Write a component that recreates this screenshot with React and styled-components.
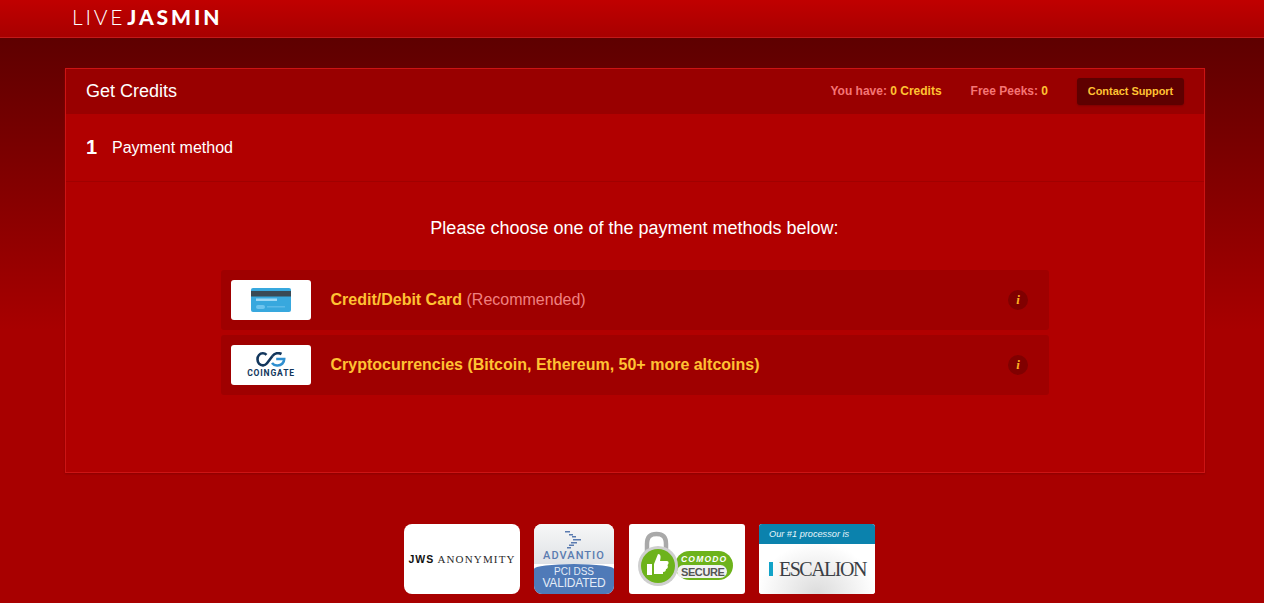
import React from 'react';
import styled, { createGlobalStyle } from 'styled-components';

const Global = createGlobalStyle`
  html, body { margin: 0; padding: 0; height: 603px; overflow: hidden; }
  body { font-family: "Liberation Sans", Arial, sans-serif; background: linear-gradient(to bottom, #5e0000 38px, #a80000 330px); color: #fff; }
`;
const Page = styled.div`height: 603px; overflow: hidden;`;
const TopBar = styled.header`
  height: 37px; padding-left: 72px; display: flex; align-items: flex-start;
  background: linear-gradient(to bottom, #c00000, #a80000); border-bottom: 1px solid #c21a1a;
`;
const Logo = styled.div`
  display: flex; margin-top: 7px; font-family: Lato, sans-serif; font-size: 21px; line-height: 20px; color: #fff;
`;
const LogoThin = styled.span`font-weight: 300; letter-spacing: 2.800px; margin-right: 2px;`;
const LogoBold = styled.span`font-weight: 900; letter-spacing: 2.900px;`;
const Main = styled.div`padding: 30px 59px 0 65px;`;
const Panel = styled.section`
  height: 405px; box-sizing: border-box; border: 1px solid #cc1414; background: #b10000;
  display: flex; flex-direction: column; box-shadow: 0 1px 2px #8a0000;
`;
const PanelHead = styled.div`
  height: 45px; flex: none; background: #990000; display: flex; align-items: center; justify-content: space-between;
  padding: 0 20px;
`;
const PanelTitle = styled.h1`margin: 0; font-size: 18px; font-weight: 400; color: #fff;`;
const Stats = styled.div`display: flex; align-items: center;`;
const Stat = styled.span`font-size: 12px; font-weight: 700; color: #f57575; margin-right: 29px; position: relative; top: -1px; b { color: #ffc233; }`;
const SupportBtn = styled.button`
  width: 107px; height: 27px; padding: 0 0 2px; border: 0; border-radius: 3px; background: #5e0000;
  box-shadow: 0 1px 2px #7d0000;
  font: 700 11px "Liberation Sans", Arial, sans-serif; letter-spacing: -.05px; color: #ffc233;
`;
const StepRow = styled.div`
  height: 68px; flex: none; box-sizing: border-box; border-bottom: 1px solid #a00000;
  display: flex; align-items: center; padding: 0 20px;
`;
const StepNum = styled.span`width: 26px; font-size: 20px; font-weight: 700; color: #fff;`;
const StepLabel = styled.span`font-size: 16px; line-height: 20px; color: #fff;`;
const Heading = styled.h2`
  margin: 36px 0 31px; padding-right: 1px; text-align: center; font-size: 18px; line-height: 21px; font-weight: 400; color: #fff;
`;
const Methods = styled.div`display: flex; flex-direction: column; gap: 5px; margin: 0 155px;`;
const Method = styled.div`
  height: 60px; box-sizing: border-box; background: #9f0000; border-radius: 3px; display: flex; align-items: center;
  padding: 0 21px 0 10px;
`;
const Thumb = styled.div`
  width: 80px; height: 40px; background: #fff; border-radius: 3px; display: flex; flex-direction: column;
  align-items: center; justify-content: center; flex: none;
`;
const MethodText = styled.div`
  flex: 1; margin-left: 19.500px; font-size: 16px; font-weight: 700; color: #ffc233;
  span { font-weight: 400; color: #f08080; }
`;
const Info = styled.span`
  width: 20px; height: 20px; border-radius: 50%; background: #800000; display: flex; align-items: center; justify-content: center;
  font: italic 700 13px "Liberation Serif", serif; color: #ffb020;
`;
const CoinWord = styled.span`font: 700 8.500px/9px Roboto, sans-serif; letter-spacing: .85px; color: #12365c; margin-top: 2px;`;
const Badges = styled.div`display: flex; justify-content: center; margin-top: 51px; padding-left: 9px;`;
const Badge = styled.div`
  width: ${p => p.$w}px; height: 70px; margin-right: ${p => p.$gap}px; border-radius: ${p => p.$r}px; background: #fff; overflow: hidden;
  display: flex; flex-direction: column; align-items: center; justify-content: center; flex: none;
`;
const Jws = styled.div`font: 400 11px "Liberation Serif", serif; letter-spacing: 1.150px; color: #2a2a2a; white-space: nowrap; b { font: 700 10.500px "Liberation Sans", sans-serif; letter-spacing: 1px; color: #111; }`;
const AdvTop = styled.div`
  flex: 1; width: 100%; background: linear-gradient(#f7f7f7, #dfe2e6); display: flex; flex-direction: column; align-items: center; justify-content: space-between;
  padding-top: 7px; box-sizing: border-box;
`;
const AdvName = styled.div`font: 500 11px Roboto, sans-serif; letter-spacing: 1.050px; color: #5a7bb0; margin-bottom: 2px;`;
const AdvBottom = styled.div`
  width: 100%; height: 31px; background: #4f7ab8; border-radius: 50% 50% 0 0 / 5px 5px 0 0; color: #e4ecf7; text-align: center;
`;
const AdvSmall = styled.div`font: 400 10px/11px "Liberation Sans", sans-serif; margin-top: 2px;`;
const AdvBig = styled.div`font: 400 12px/13px "Liberation Sans", sans-serif; letter-spacing: -.2px;`;
const EscTop = styled.div`
  width: 100%; height: 20px; background: #0b82ad; color: #e8f6fb; font: italic 400 9.200px/20px "Liberation Sans", sans-serif; padding-left: 10px; box-sizing: border-box;
`;
const EscBody = styled.div`
  flex: 1; width: 100%; background: radial-gradient(ellipse at 50% 100%, #dcdcdc, #fff 72%); display: flex; align-items: center; padding-left: 10px; box-sizing: border-box; gap: 6px;
`;
const EscMark = styled.i`width: 4px; height: 14px; background: #12a3c8;`;
const EscName = styled.span`font: 400 20px "Liberation Serif", serif; letter-spacing: -1.500px; color: #3b3f45;`;

const CardIcon = () => (
  <svg width="40" height="24" viewBox="0 0 40 24">
    <rect width="40" height="24" rx="2" fill="#38a8de" />
    <rect y="3" width="40" height="5.500" fill="#3a4a55" />
    <rect x="5" y="10.500" width="21" height="2.500" fill="#9ed8f5" />
    <rect x="5" y="17" width="9" height="4" rx="2" fill="#6ec4ee" />
    <rect x="16" y="18" width="18" height="1.500" fill="#5cb9e8" />
  </svg>
);
const CoinIcon = () => (
  <svg width="30" height="15" viewBox="0 0 30 15" fill="none" strokeWidth="2.600">
    <path d="M10.500 2.800C8.500.8 5 .8 3 3 1 5.200 1 9.500 3 11.700c2.300 2.400 6 2.200 8-.4L16.500 4" stroke="#12365c" />
    <path d="M16.500 4c2-2.800 6-3.600 9-2" stroke="#12365c" />
    <path d="M16 11c2.300 3 7.500 3.400 10.200.8 1.400-1.300 2-2.800 2-4.800h-8" stroke="#2f8fd0" />
  </svg>
);
const AdvIcon = () => (
  <svg width="18" height="18" viewBox="0 0 18 18" fill="#5a7bb0">
    <rect x="0" y="0" width="5" height="1.500" /><rect x="4" y="3" width="4" height="1.500" /><rect x="7" y="5" width="4" height="1.500" />
    <rect x="8" y="8" width="8" height="1.500" /><rect x="6" y="11" width="6" height="1.500" /><rect x="4" y="13.500" width="5" height="1.500" /><rect x="2" y="16" width="4" height="1.500" />
  </svg>
);
const ComodoSeal = () => (
  <svg width="116" height="70" viewBox="0 0 116 70">
    <path d="M18 30V20C18 12 22 10 27.500 10S37 12 37 20v10" fill="none" stroke="#a9a9a9" strokeWidth="4.500" />
    <rect x="46" y="27" width="58" height="29" rx="14.500" fill="#6db31b" />
    <rect x="48" y="41" width="50" height="13" rx="6.500" fill="#f2f2f2" />
    <circle cx="29" cy="42" r="20" fill="#cfcfcf" />
    <circle cx="29" cy="42" r="17" fill="#6db31b" />
    <path d="M18 40h5v11h-5zM25 40l4-10c3 0 3 3 2 7h7c2 0 2 3 .5 4 1 2 0 4-1.500 4 0 2-1 3-3 3v2H25z" fill="#fff" />
    <text x="52" y="38" fontFamily="Liberation Sans" fontWeight="700" fontStyle="italic" fontSize="8.500" letterSpacing="1.200" fill="#fff">COMODO</text>
    <text x="52" y="51.500" fontFamily="Liberation Sans" fontWeight="700" fontSize="11" letterSpacing="-.4" fill="#555">SECURE</text>
  </svg>
);

export default function App() {
  return (
    <Page>
      <Global />
      <TopBar><Logo><LogoThin>LIVE</LogoThin><LogoBold>JASMIN</LogoBold></Logo></TopBar>
      <Main>
        <Panel>
          <PanelHead>
            <PanelTitle>Get Credits</PanelTitle>
            <Stats>
              <Stat>You have: <b>0 Credits</b></Stat>
              <Stat>Free Peeks: <b>0</b></Stat>
              <SupportBtn>Contact Support</SupportBtn>
            </Stats>
          </PanelHead>
          <StepRow><StepNum>1</StepNum><StepLabel>Payment method</StepLabel></StepRow>
          <Heading>Please choose one of the payment methods below:</Heading>
          <Methods>
            <Method>
              <Thumb><CardIcon /></Thumb>
              <MethodText>Credit/Debit Card <span>(Recommended)</span></MethodText>
              <Info>i</Info>
            </Method>
            <Method>
              <Thumb><CoinIcon /><CoinWord>COINGATE</CoinWord></Thumb>
              <MethodText>Cryptocurrencies (Bitcoin, Ethereum, 50+ more altcoins)</MethodText>
              <Info>i</Info>
            </Method>
          </Methods>
        </Panel>
        <Badges>
          <Badge $w={116} $gap={14} $r={8}><Jws><b>JWS</b> ANONYMITY</Jws></Badge>
          <Badge $w={80} $gap={15} $r={8}>
            <AdvTop><AdvIcon /><AdvName>ADVANTIO</AdvName></AdvTop>
            <AdvBottom><AdvSmall>PCI DSS</AdvSmall><AdvBig>VALIDATED</AdvBig></AdvBottom>
          </Badge>
          <Badge $w={116} $gap={14} $r={3}><ComodoSeal /></Badge>
          <Badge $w={116} $gap={0} $r={3}>
            <EscTop>Our #1 processor is</EscTop>
            <EscBody><EscMark /><EscName>ESCALION</EscName></EscBody>
          </Badge>
        </Badges>
      </Main>
    </Page>
  );
}
